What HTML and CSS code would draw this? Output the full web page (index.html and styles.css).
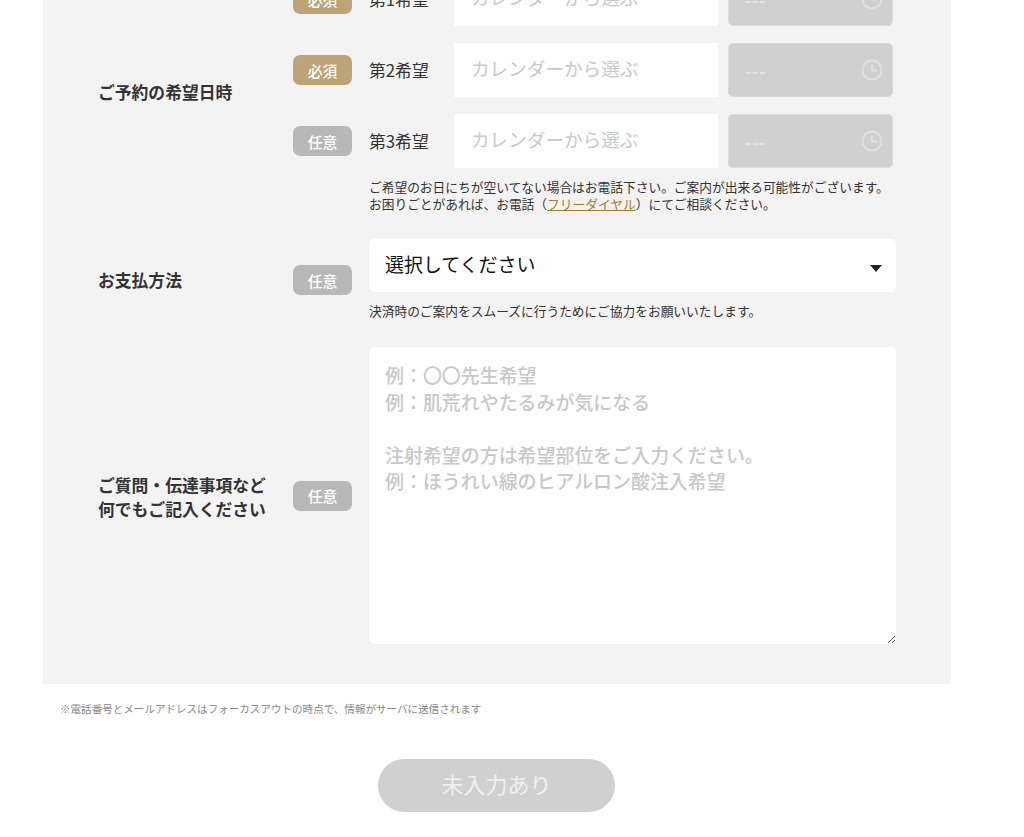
FILE: index.html
```html
<!DOCTYPE html>
<html lang="ja">
<head>
<meta charset="utf-8">
<title>ご予約</title>
<link rel="stylesheet" href="styles.css">
</head>
<body>
<main class="page">
  <form class="panel">
    <section class="group">
      <h2 class="group-title">ご予約の希望日時</h2>
      <div class="group-body">
        <div class="date-row">
          <span class="badge badge-required">必須</span>
          <span class="choice">第1希望</span>
          <input class="date-input" type="text" placeholder="カレンダーから選ぶ">
          <div class="time-box"><span class="time-text">---</span>
            <svg class="clock" viewBox="0 0 22 22"><circle cx="11" cy="11" r="9.5"/><path d="M11 5.5V11.5H16"/></svg>
          </div>
        </div>
        <div class="date-row">
          <span class="badge badge-required">必須</span>
          <span class="choice">第2希望</span>
          <input class="date-input" type="text" placeholder="カレンダーから選ぶ">
          <div class="time-box"><span class="time-text">---</span>
            <svg class="clock" viewBox="0 0 22 22"><circle cx="11" cy="11" r="9.5"/><path d="M11 5.5V11.5H16"/></svg>
          </div>
        </div>
        <div class="date-row">
          <span class="badge badge-optional">任意</span>
          <span class="choice">第3希望</span>
          <input class="date-input" type="text" placeholder="カレンダーから選ぶ">
          <div class="time-box"><span class="time-text">---</span>
            <svg class="clock" viewBox="0 0 22 22"><circle cx="11" cy="11" r="9.5"/><path d="M11 5.5V11.5H16"/></svg>
          </div>
        </div>
        <p class="note note-dates">ご希望のお日にちが空いてない場合はお電話下さい。ご案内が出来る可能性がございます。<br>お困りごとがあれば、お電話（<a class="note-link" href="#">フリーダイヤル</a>）にてご相談ください。</p>
      </div>
    </section>

    <section class="group">
      <h2 class="group-title">お支払方法</h2>
      <span class="badge badge-optional">任意</span>
      <div class="field">
        <div class="select-box"><span class="select-text">選択してください</span><i class="select-arrow"></i></div>
        <p class="note note-pay">決済時のご案内をスムーズに行うためにご協力をお願いいたします。</p>
      </div>
    </section>

    <section class="group">
      <h2 class="group-title group-title-long">ご質問・伝達事項など<br>何でもご記入ください</h2>
      <span class="badge badge-optional">任意</span>
      <div class="field">
        <textarea class="message" placeholder="例：〇〇先生希望&#10;例：肌荒れやたるみが気になる&#10;&#10;注射希望の方は希望部位をご入力ください。&#10;例：ほうれい線のヒアルロン酸注入希望"></textarea>
      </div>
    </section>
  </form>
  <p class="footnote">※電話番号とメールアドレスはフォーカスアウトの時点で、情報がサーバに送信されます</p>
  <div class="actions"><button class="submit" type="button">未入力あり</button></div>
</main>
</body>
</html>
```
FILE: styles.css
```css
* { box-sizing: border-box; }
html, body { margin: 0; height: 837px; overflow: hidden; background: #fff; }
body { font-family: "Noto Sans CJK JP", "Noto Sans", sans-serif; color: #333; }
.page { width: 1024px; margin-top: -28px; padding-left: 43px; }
.panel { width: 908px; background: #f3f3f3; padding: 0 55px 40px; display: flex; flex-direction: column; gap: 26px; }
.group { display: flex; align-items: center; }
.group-title { width: 195px; flex: none; margin: 0; font-size: 16.8px; line-height: 24.5px; font-weight: 700; color: #333; }
.group-title-long { padding-top: 3px; }
.group-body { display: flex; flex-direction: column; gap: 17px; }
.date-row { display: flex; align-items: center; }
.badge { width: 59px; height: 30px; flex: none; display: flex; align-items: center; justify-content: center; border-radius: 7px; color: #fff; font-size: 14.8px; font-weight: 500; }
.badge-required { background: #bda476; }
.badge-optional { background: #b8b8b8; }
.choice { width: 85px; flex: none; margin-left: 17px; font-size: 16.8px; font-weight: 400; white-space: nowrap; }
.date-input { width: 264px; height: 54px; flex: none; border: 0; outline: 0; background: #fff; padding: 0 17px 5px; font: 400 18.6px "Noto Sans CJK JP", sans-serif; }
.date-input::placeholder, .message::placeholder { color: #c8c8c8; opacity: 1; }
.time-box { width: 165px; height: 54px; flex: none; margin-left: 10px; padding: 0 9px 0 16px; display: flex; align-items: center; justify-content: space-between; background: #d0d0d0; border: 1px solid #dbdbdb; border-radius: 5px; }
.time-text { color: #e2e2e2; font-size: 18.5px; font-weight: 700; }
.clock { width: 22px; height: 22px; fill: none; stroke: #e0e0e0; stroke-width: 2; }
.note { margin: 0; font-size: 12.73px; line-height: 17px; color: #333; white-space: nowrap; }
.note-dates { margin: -7px 0 1px 76px; }
.note-link { color: #a37c2c; }
.field { width: 527px; flex: none; margin-left: 17px; }
.select-box { height: 53px; background: #fff; border-radius: 5px; padding: 0 14px 0 16px; display: flex; align-items: center; justify-content: space-between; font-size: 18.95px; color: #111; }
.select-text { padding-bottom: 5px; }
.select-arrow { width: 0; height: 0; border-style: solid; border-width: 7px 6.5px 0; border-color: #222 transparent transparent; margin-top: 5px; }
.note-pay { margin: 10px 0 2px; }
.message { display: block; width: 527px; height: 297px; border: 0; outline: 0; background: #fff; border-radius: 5px; padding: 15px 16px; font: 500 18.95px/26.5px "Noto Sans CJK JP", sans-serif; }
.footnote { margin: 17px 0 0 17px; font-size: 10.55px; line-height: 16px; color: #888; }
.actions { margin: 42px 0 0 335px; }
.submit { width: 237px; height: 53px; border: 0; border-radius: 27px; background: #d0d0d0; color: #f0f0f0; padding: 0 0 5px; font: 400 22px "Noto Sans CJK JP", sans-serif; }
```
